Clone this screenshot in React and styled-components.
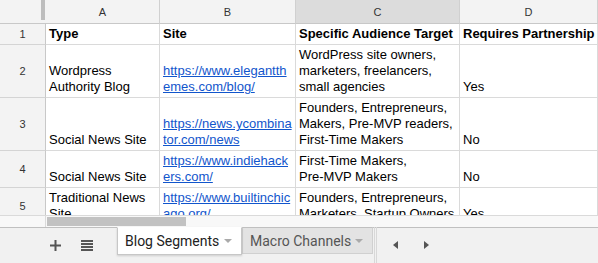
import React from "react";
import styled, { createGlobalStyle } from "styled-components";

const Global = createGlobalStyle`
  html, body { margin: 0; padding: 0; background: #fff; }
  body { font-family: "Liberation Sans", Arial, sans-serif; }
`;

const Sheet = styled.div`
  width: 598px;
  height: 263px;
  display: flex;
  flex-direction: column;
  overflow: hidden;
  background: #fff;
`;

const GridWrap = styled.div`
  height: 215px;
  overflow: hidden;
  flex: none;
`;

const Grid = styled.div`
  display: grid;
  grid-template-columns: 46px 114px 136px 164px 138px;
  grid-template-rows: 24px 21px 53px 53px 37px 37px;
`;

const Corner = styled.div`
  background: #f3f3f3;
  border-bottom: 1px solid #c8c8c8;
  position: relative;
  &::after {
    content: "";
    position: absolute;
    right: 1px;
    top: 0;
    width: 4px;
    height: 20px;
    background: #bdbdbd;
  }
`;

const ColHead = styled.div`
  background: ${(p) => (p.$active ? "#dcdcdc" : "#f3f3f3")};
  border-right: 1px solid #d0d0d0;
  border-bottom: 1px solid #c8c8c8;
  display: flex;
  align-items: center;
  justify-content: center;
  font-size: 11px;
  color: #333;
  padding-top: 1px;
`;

const RowHead = styled.div`
  background: #f3f3f3;
  border-right: 1px solid #c8c8c8;
  border-bottom: 1px solid #d4d4d4;
  display: flex;
  align-items: center;
  justify-content: center;
  font-size: 11px;
  color: #333;
`;

const Cell = styled.div`
  border-right: 1px solid #dadada;
  border-bottom: 1px solid #dadada;
  display: flex;
  flex-direction: column;
  justify-content: flex-end;
  padding: 0 3px 2px;
  font-size: 13px;
  line-height: 16px;
  color: #000;
  font-weight: ${(p) => (p.$bold ? 700 : 400)};
  overflow: hidden;
  white-space: nowrap;
`;

const Link = styled.a`
  color: #1155cc;
  text-decoration: underline;
`;

const ScrollRow = styled.div`
  height: 12px;
  flex: none;
  display: flex;
  background: #f8f8f8;
  border-top: 1px solid #dadada;
  box-sizing: border-box;
`;

const ScrollGutter = styled.div`
  width: 46px;
  border-right: 1px solid #dadada;
  box-sizing: border-box;
  background: #f8f8f8;
`;

const ScrollTrack = styled.div`
  flex: 1;
  padding: 1px 0 0 1px;
`;

const Thumb = styled.div`
  width: 139px;
  height: 9px;
  background: #c2c2c2;
`;

const TabBar = styled.div`
  flex: 1;
  display: flex;
  align-items: flex-start;
  background: #f1f1f1;
  border-top: 1px solid #c0c0c0;
  font-family: Roboto, "Liberation Sans", sans-serif;
`;

const IconButton = styled.div`
  width: ${(p) => p.$w}px;
  margin-left: ${(p) => p.$ml || 0}px;
  height: 34px;
  display: flex;
  align-items: center;
  justify-content: center;
  color: #555;
`;

const Tab = styled.div`
  height: ${(p) => (p.$active ? 28 : 27)}px;
  margin-top: -1px;
  padding: 0 0 0 7px;
  display: flex;
  align-items: center;
  box-sizing: border-box;
  background: ${(p) => (p.$active ? "#fff" : "#e3e3e3")};
  color: ${(p) => (p.$active ? "#222" : "#555")};
  border: 1px solid ${(p) => (p.$active ? "#c7c7c7" : "#d0d0d0")};
  border-top: ${(p) => (p.$active ? "1px solid #fff" : "1px solid #c0c0c0")};
  box-shadow: ${(p) => (p.$active ? "0 1px 2px rgba(0,0,0,0.15)" : "none")};
  font-size: 14px;
  width: ${(p) => p.$w}px;
  margin-left: ${(p) => p.$ml || 0}px;
  position: relative;
  z-index: ${(p) => (p.$active ? 1 : 0)};
`;

const Caret = styled.span`
  margin-left: auto;
  margin-right: 9px;
  width: 0;
  height: 0;
  border-left: 4px solid transparent;
  border-right: 4px solid transparent;
  border-top: 4px solid #aaa;
`;

const Divider = styled.div`
  width: 3px;
  height: 36px;
  margin-top: -1px;
  margin-left: 1px;
  border-left: 1px solid #d8d8d8;
  border-right: 1px solid #d8d8d8;
  box-sizing: border-box;
`;

const Arrows = styled.div`
  display: flex;
  gap: 26px;
  padding-left: 16px;
  height: 34px;
  align-items: center;
`;

const Tri = styled.span`
  width: 0;
  height: 0;
  border-top: 4px solid transparent;
  border-bottom: 4px solid transparent;
  ${(p) =>
    p.$dir === "left"
      ? "border-right: 5px solid #555;"
      : "border-left: 5px solid #555;"}
`;

const rows = [
  {
    n: 1,
    bold: true,
    a: ["Type"],
    b: ["Site"],
    c: ["Specific Audience Target"],
    d: ["Requires Partnership"],
  },
  {
    n: 2,
    a: ["Wordpress", "Authority Blog"],
    b: ["https://www.elegantth", "emes.com/blog/"],
    bl: true,
    c: ["WordPress site owners,", "marketers, freelancers,", "small agencies"],
    d: ["Yes"],
  },
  {
    n: 3,
    a: ["Social News Site"],
    b: ["https://news.ycombina", "tor.com/news"],
    bl: true,
    c: ["Founders, Entrepreneurs,", "Makers, Pre-MVP readers,", "First-Time Makers"],
    d: ["No"],
  },
  {
    n: 4,
    a: ["Social News Site"],
    b: ["https://www.indiehack", "ers.com/"],
    bl: true,
    c: ["First-Time Makers,", "Pre-MVP Makers"],
    d: ["No"],
  },
  {
    n: 5,
    a: ["Traditional News", "Site"],
    b: ["https://www.builtinchic", "ago.org/"],
    bl: true,
    c: ["Founders, Entrepreneurs,", "Marketers, Startup Owners"],
    d: ["Yes"],
  },
];

const Lines = ({ lines, link }) =>
  lines.map((l, i) =>
    link ? (
      <div key={i}>
        <Link href="#">{l}</Link>
      </div>
    ) : (
      <div key={i}>{l}</div>
    )
  );

export default function App() {
  return (
    <>
      <Global />
      <Sheet>
        <GridWrap>
          <Grid>
            <Corner />
            <ColHead>A</ColHead>
            <ColHead>B</ColHead>
            <ColHead $active>C</ColHead>
            <ColHead>D</ColHead>
            {rows.map((r) => (
              <React.Fragment key={r.n}>
                <RowHead>{r.n}</RowHead>
                <Cell $bold={r.bold}>
                  <Lines lines={r.a} />
                </Cell>
                <Cell $bold={r.bold}>
                  <Lines lines={r.b} link={r.bl} />
                </Cell>
                <Cell $bold={r.bold}>
                  <Lines lines={r.c} />
                </Cell>
                <Cell $bold={r.bold}>
                  <Lines lines={r.d} />
                </Cell>
              </React.Fragment>
            ))}
          </Grid>
        </GridWrap>
        <ScrollRow>
          <ScrollGutter />
          <ScrollTrack>
            <Thumb />
          </ScrollTrack>
        </ScrollRow>
        <TabBar>
          <IconButton $w={40} $ml={35}>
            <svg width="11" height="11" viewBox="0 0 11 11">
              <rect x="4.5" y="0" width="2" height="11" fill="#555" />
              <rect x="0" y="4.5" width="11" height="2" fill="#555" />
            </svg>
          </IconButton>
          <IconButton $w={24}>
            <svg width="12" height="11" viewBox="0 0 12 11">
              <rect x="0" y="0" width="12" height="2" fill="#555" />
              <rect x="0" y="3" width="12" height="2" fill="#555" />
              <rect x="0" y="6" width="12" height="2" fill="#555" />
              <rect x="0" y="9" width="12" height="2" fill="#555" />
            </svg>
          </IconButton>
          <Tab $active $w={125} $ml={18}>
            Blog Segments
            <Caret />
          </Tab>
          <Tab $w={131}>
            Macro Channels
            <Caret />
          </Tab>
          <Divider />
          <Arrows>
            <Tri $dir="left" />
            <Tri $dir="right" />
          </Arrows>
        </TabBar>
      </Sheet>
    </>
  );
}
